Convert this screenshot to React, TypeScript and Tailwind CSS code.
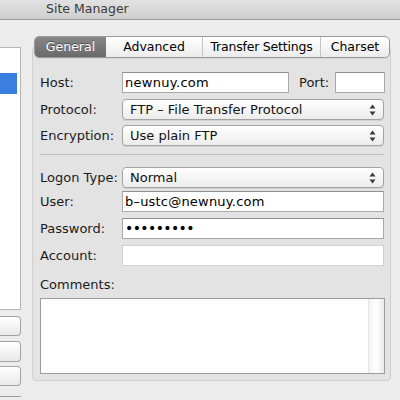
import React from 'react';

const font = { fontFamily: '"DejaVu Sans", "Liberation Sans", sans-serif' };

const Arrows: React.FC = () => (
    <svg width="7" height="12" viewBox="0 0 7 12" className="shrink-0">
        <path d="M3.5 0.5 L6.5 4.5 L0.5 4.5 Z" fill="#3a3a3a" />
        <path d="M3.5 11.5 L6.5 7.5 L0.5 7.5 Z" fill="#3a3a3a" />
    </svg>
);

const Select: React.FC<{ value: string; className?: string }> = ({ value, className = '' }) => (
    <div
        className={`h-[21px] w-[262px] rounded-[4px] border border-[#a3a3a3] bg-gradient-to-b from-white to-[#ececec] flex items-center justify-between pl-[7px] pr-[7px] text-[13px] text-[#111] shadow-[0_1px_0_rgba(0,0,0,0.08)] ${className}`}
    >
        <span>{value}</span>
        <Arrows />
    </div>
);

const Input: React.FC<{ value?: string; className?: string; light?: boolean }> = ({ value, className = '', light }) => (
    <div
        className={`h-[21px] bg-white border ${light ? 'border-[#d2d2d2]' : 'border-[#a9a9a9] border-t-[#8f8f8f]'} flex items-center pl-[2px] text-[13px] text-black ${className}`}
    >
        {value}
    </div>
);

const Label: React.FC<{ children: React.ReactNode }> = ({ children }) => (
    <div className="w-[82px] shrink-0 text-[13px] text-[#1b1b1b]">{children}</div>
);

export default function App() {
    return (
        <div className="w-[400px] h-[400px] bg-[#ececec] overflow-hidden flex flex-col" style={font}>
            {/* title bar */}
            <div className="h-[20px] shrink-0 bg-gradient-to-b from-[#e2e2e2] to-[#cfcfcf] border-b border-[#9b9b9b] flex items-center pl-[46px] text-[12.5px] text-[#3a3a3a]">
                Site Manager
            </div>

            <div className="flex flex-1">
                {/* site list column */}
                <div className="w-[21px] shrink-0 flex flex-col">
                    <div className="mt-[27px] h-[263px] bg-white border border-l-0 border-[#b5b5b5] pt-[25px]">
                        <div className="h-[21px] w-[17px] bg-[#3b7fde]" />
                    </div>
                    <div className="mt-[6px] h-[20px] rounded-r-[4px] border border-l-0 border-[#a3a3a3] bg-gradient-to-b from-white to-[#e9e9e9]" />
                    <div className="mt-[5px] h-[21px] rounded-r-[4px] border border-l-0 border-[#a3a3a3] bg-gradient-to-b from-white to-[#e9e9e9]" />
                    <div className="mt-[4px] h-[20px] rounded-r-[4px] border border-l-0 border-[#a3a3a3] bg-gradient-to-b from-white to-[#e9e9e9]" />
                    <div className="mt-[10px] h-px w-[21px] bg-[#9c9c9c]" />
                </div>

                {/* settings area */}
                <div className="ml-[11px] flex flex-col">
                    {/* tabs */}
                    <div className="relative z-10 mt-[16px] ml-[2px] h-[22px] w-[356px] flex rounded-[5px] border border-[#9a9a9a] bg-gradient-to-b from-white to-[#ececec] text-[12.5px] overflow-hidden shadow-[0_1px_0_rgba(0,0,0,0.06)]">
                        <div className="w-[71px] flex items-center justify-center bg-gradient-to-b from-[#878787] to-[#6a6a6a] text-white [text-shadow:0_-1px_0_rgba(0,0,0,0.4)]">
                            General
                        </div>
                        <div className="w-[97px] flex items-center justify-center text-black border-r border-[#c4c4c4]">Advanced</div>
                        <div className="w-[118px] flex items-center justify-center text-black border-r border-[#c4c4c4] tracking-[-0.2px]">Transfer Settings</div>
                        <div className="flex-1 flex items-center justify-center text-black">Charset</div>
                    </div>

                    {/* panel */}
                    <div className="-mt-[12px] w-[359px] h-[335px] rounded-[4px] border border-[#d0d0d0] bg-[#e3e3e3] pl-[7px] pt-[25px] flex flex-col">
                        <div className="flex items-center h-[21px]">
                            <Label>Host:</Label>
                            <Input value="newnuy.com" className="w-[167px] tracking-[0.3px]" />
                            <span className="ml-[10px] text-[13px] text-[#1b1b1b]">Port:</span>
                            <Input className="ml-[6px] w-[50px]" />
                        </div>
                        <div className="flex items-center mt-[6px]">
                            <Label>Protocol:</Label>
                            <Select value="FTP – File Transfer Protocol" />
                        </div>
                        <div className="flex items-center mt-[5px]">
                            <Label>Encryption:</Label>
                            <Select value="Use plain FTP" />
                        </div>

                        <div className="mt-[8px] h-px w-[344px] bg-[#bdbdbd]" />

                        <div className="flex items-center mt-[12px]">
                            <Label>Logon Type:</Label>
                            <Select value="Normal" />
                        </div>
                        <div className="flex items-center mt-[3px]">
                            <Label>User:</Label>
                            <Input value="b–ustc@newnuy.com" className="w-[262px] tracking-[0.2px]" />
                        </div>
                        <div className="flex items-center mt-[6px]">
                            <Label>Password:</Label>
                            <Input className="w-[262px] text-[14px] tracking-[-0.6px]" value="•••••••••" />
                        </div>
                        <div className="flex items-center mt-[6px]">
                            <Label>Account:</Label>
                            <Input className="w-[262px]" light />
                        </div>

                        <div className="mt-[11px] text-[13px] text-[#1b1b1b] leading-[16px]">Comments:</div>
                        <div className="mt-[5px] w-[345px] h-[76px] bg-white border border-[#9c9c9c] flex justify-end">
                            <div className="w-[16px] h-full border-l border-[#e4e4e4] bg-gradient-to-r from-[#f3f3f3] via-white to-[#e9e9e9]" />
                        </div>
                    </div>
                </div>
            </div>
        </div>
    );
}
